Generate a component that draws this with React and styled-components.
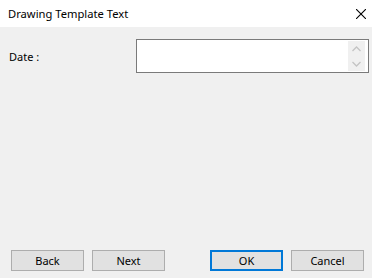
import React from "react"
import styled, { createGlobalStyle } from "styled-components"

const GlobalStyle = createGlobalStyle`
html, body {
margin: 0;
padding: 0;
background: #f0f0f0;
}
#root {
width: 372px;
height: 278px;
}
`

const Dialog = styled.div`
display: flex;
flex-direction: column;
width: 372px;
height: 278px;
font-family: "Noto Sans", "Open Sans", sans-serif;
font-size: 11px;
color: #000;
overflow: hidden;
`

const TitleBar = styled.div`
display: flex;
align-items: center;
justify-content: space-between;
height: 27px;
background: #fff;
padding: 0 6px 0 8px;
box-sizing: border-box;
`

const Title = styled.span`
font-size: 11.2px;
`

const CloseBtn = styled.div`
display: flex;
width: 10px;
height: 10px;
margin-top: 1px;
`

const Body = styled.div`
display: flex;
flex-direction: column;
flex: 1;
background: #f0f0f0;
`

const FieldRow = styled.div`
display: flex;
align-items: center;
padding: 12px 3px 0 9px;
`

const Label = styled.span`
width: 127px;
font-size: 11px;
`

const SpinBox = styled.div`
display: flex;
justify-content: flex-end;
flex: 1;
height: 34px;
box-sizing: border-box;
border: 1px solid #7a7a7a;
background: #fff;
padding: 1px 3px 1px 0;
`

const SpinButtons = styled.div`
display: flex;
flex-direction: column;
width: 17px;
background: #f0f0f0;
`

const SpinArrow = styled.div`
display: flex;
flex: 1;
align-items: center;
justify-content: center;
`

const Footer = styled.div`
display: flex;
align-items: center;
margin-top: auto;
padding: 0 8px 7px 11px;
gap: 8px;
`

const Spacer = styled.div`
flex: 1;
`

const Button = styled.button`
width: 73px;
height: 21px;
box-sizing: border-box;
background: #e1e1e1;
border: ${(p) => (p.$default ? "2px solid #0078d7" : "1px solid #adadad")};
font-family: inherit;
font-size: 11px;
color: #000;
padding: 0;
outline: none;
`

const Chevron = ({ up }) => (
  <svg width="9" height="6" viewBox="0 0 9 6">
    <path
      d={up ? "M0.5 5 L4.5 1 L8.5 5" : "M0.5 1 L4.5 5 L8.5 1"}
      fill="none"
      stroke="#c4c4c4"
      strokeWidth="1.3"
    />
  </svg>
)

export default function App() {
  return (
    <>
      <GlobalStyle />
      <Dialog>
        <TitleBar>
          <Title>Drawing Template Text</Title>
          <CloseBtn>
            <svg width="10" height="10" viewBox="0 0 10 10">
              <path d="M0 0 L10 10 M10 0 L0 10" stroke="#000" strokeWidth="1.1" />
            </svg>
          </CloseBtn>
        </TitleBar>
        <Body>
          <FieldRow>
            <Label>Date :</Label>
            <SpinBox>
              <SpinButtons>
                <SpinArrow><Chevron up /></SpinArrow>
                <SpinArrow><Chevron /></SpinArrow>
              </SpinButtons>
            </SpinBox>
          </FieldRow>
          <Footer>
            <Button>Back</Button>
            <Button>Next</Button>
            <Spacer />
            <Button $default>OK</Button>
            <Button>Cancel</Button>
          </Footer>
        </Body>
      </Dialog>
    </>
  )
}
